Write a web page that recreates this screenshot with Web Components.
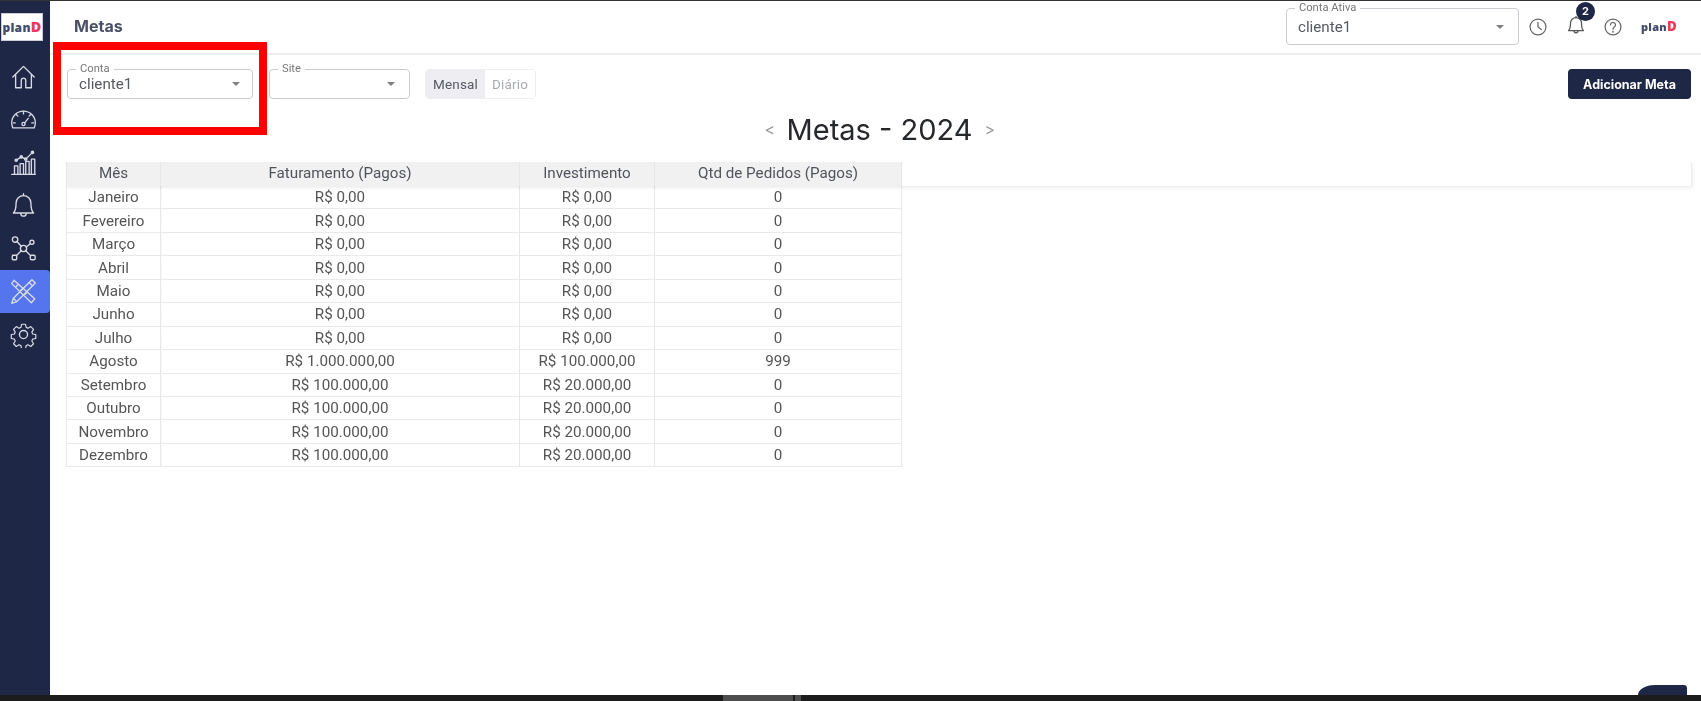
<!DOCTYPE html>
<html lang="pt-BR">
<head>
<meta charset="utf-8">
<title>Metas</title>
<style>
  html, body { margin: 0; height: 100%; background: #fff; overflow: hidden; }
  body { font-family: Roboto, "Liberation Sans", sans-serif; }
</style>
</head>
<body>
<app-shell>
  <side-nav slot="nav"></side-nav>
  <top-header slot="header" title="Metas"></top-header>
  <filter-bar slot="filters"></filter-bar>
  <year-heading slot="heading" label="Metas - 2024"></year-heading>
  <goals-table slot="table"></goals-table>
</app-shell>

<script>
// brand mark, used in the sidebar and in the header
class BrandLogo extends HTMLElement {
    connectedCallback() {
        this.attachShadow({ mode: 'open' }).innerHTML = `
      <style>
        :host {
          display: inline-block;
          font: 800 var(--logo-size, 12px)/1 "Open Sans", Inter, sans-serif;
          color: #454b6b;
          letter-spacing: .3px;
        }
        b { color: #ee3a5a; font-weight: 800; font-size: 1.2em; }
      </style>
      plan<b>D</b>`;
    }
}
customElements.define('brand-logo', BrandLogo);

// stroke icons of the sidebar and header
const ICONS = {
    home: '<path d="M2.5 12.5 12 3l9.5 9.5"/><path d="M5 10.5V22h5v-6.5a2 2 0 0 1 4 0V22h5V10.5"/>',
    gauge: '<path d="M2.5 19.5h19a10.6 10.6 0 0 0 1-4.5 10.5 10.5 0 0 0-21 0c0 1.6.4 3.1 1 4.5Z"/><path d="M12 7V4.8M7 9 5.6 7.6M17 9l1.4-1.4M4.6 15H3M21 15h-1.6"/><circle cx="12" cy="16" r="1.4"/><path d="m13 15 3.2-4"/>',
    chart: '<path d="M1.5 22.5h21"/><path d="M4 22v-7h3v7M9 22v-9h3v9M14 22v-11h3v11M19 22V9h3v13"/><path d="M5.5 10 10 7l4 2 6-6"/><circle cx="5.5" cy="10" r="1"/><circle cx="10" cy="7" r="1"/><circle cx="14" cy="9" r="1"/><circle cx="20" cy="3" r="1"/>',
    bell: '<path d="M12 3.2a6.6 6.6 0 0 0-6.6 6.6c0 5.6-.8 7.4-2.4 8.9h18c-1.6-1.5-2.4-3.3-2.4-8.9A6.6 6.6 0 0 0 12 3.2Z"/><path d="M12 1.5v1.7M9.6 19a2.4 2.4 0 0 0 4.8 0"/>',
    network: '<circle cx="12" cy="12" r="2.8"/><circle cx="4.5" cy="4" r="2.4"/><circle cx="19.5" cy="6.5" r="1.8"/><rect x="2" y="18" width="4" height="4" rx=".8"/><rect x="18" y="18" width="4.4" height="4" rx="1.4"/><path d="m6.2 5.8 3.8 4.2M14.5 10.7l3.5-3M10 14l-4.4 4.4M14 14l4.4 4.4"/>',
    tools: '<path d="M3.5 2 22 18.5 19 22 1.5 5Z"/><path d="m7 6-1.5 1.5M11 9.5l-1.5 1.5M15 13l-1.5 1.5"/><path d="M19.5 1.5 22.5 4.5 6 21l-4.5 1.5L3 18Z"/><path d="m17 4 3 3M3 18l3 3"/>',
    gear: '<circle cx="12" cy="12" r="3.6"/><path d="M10 1.5h4l.7 3.2 1.9.9 2.8-1.7 2.8 2.8-1.7 2.8.8 1.9 3.2.6v4l-3.2.7-.8 1.9 1.7 2.8-2.8 2.8-2.8-1.7-1.9.8-.7 3.2h-4l-.7-3.2-1.9-.8-2.8 1.7-2.8-2.8 1.7-2.8-.8-1.9-3.2-.7v-4l3.2-.6.8-1.9-1.7-2.8 2.8-2.8 2.8 1.7 1.9-.9Z" transform="translate(1.6 1.6) scale(.87)"/>',
    clock: '<circle cx="12" cy="12" r="9.5"/><path d="M12 6.5V12l4 3"/>',
    help: '<circle cx="12" cy="12" r="9.5"/><path d="M9 9.5a3 3 0 1 1 4.6 2.5c-1 .7-1.6 1.3-1.6 2.6"/><circle cx="12" cy="17.6" r=".4"/>'
};

class LineIcon extends HTMLElement {
    connectedCallback() {
        const name = this.getAttribute('name');
        this.attachShadow({ mode: 'open' }).innerHTML = `
      <style>
        :host { display: inline-flex; width: var(--icon-size, 24px); height: var(--icon-size, 24px); }
        svg { width: 100%; height: 100%; fill: none; stroke: currentColor; stroke-width: var(--icon-stroke, 1.2); stroke-linecap: round; stroke-linejoin: round; }
      </style>
      <svg viewBox="0 0 24 24">${ICONS[name]}</svg>`;
    }
}
customElements.define('line-icon', LineIcon);

// Page frame: sidebar, content column, dark bottom strip
class AppShell extends HTMLElement {
    connectedCallback() {
        this.attachShadow({ mode: 'open' }).innerHTML = `
      <style>
        :host { display: flex; flex-direction: column; height: 100vh; position: relative; filter: blur(.35px); }
        .top { height: 1px; background: #333; flex: none; }
        .body { flex: 1; display: flex; min-height: 0; }
        main { flex: 1; min-width: 0; display: flex; flex-direction: column; }
        .bottom { height: 6px; flex: none; background: #1c1c1c; display: flex; padding-left: 723px; }
        .thumb { width: 70px; background: #4d4d4d; border-right: 2px solid #1c1c1c; }
        .thumb + i { width: 6px; background: #4d4d4d; }
        .mark {
          position: absolute; left: 53px; top: 42px; width: 214px; height: 93px;
          box-sizing: border-box; border: 8px solid #fe0000; pointer-events: none;
        }
        .chat {
          position: absolute; right: 14px; bottom: 6px; width: 49px; height: 10px;
          background: #1f2747; border-radius: 20px 4px 0 0 / 12px 4px 0 0;
        }
      </style>
      <div class="top"></div>
      <div class="body">
        <slot name="nav"></slot>
        <main>
          <slot name="header"></slot>
          <slot name="filters"></slot>
          <slot name="heading"></slot>
          <slot name="table"></slot>
        </main>
      </div>
      <div class="bottom"><div class="thumb"></div><i></i></div>
      <div class="mark"></div>
      <div class="chat"></div>`;
    }
}
customElements.define('app-shell', AppShell);

class SideNav extends HTMLElement {
    connectedCallback() {
        const items = ['home', 'gauge', 'chart', 'bell', 'network', 'tools', 'gear'];
        const links = items.map(name =>
            `<a class="${name === 'tools' ? 'active' : ''}"><line-icon name="${name}"></line-icon></a>`).join('');
        this.attachShadow({ mode: 'open' }).innerHTML = `
      <style>
        :host {
          display: flex; flex-direction: column; width: 50px; flex: none;
          background: #1f2747; color: #d9dbe4; --icon-size: 27px; --logo-size: 12px;
        }
        .logo { height: 54px; display: flex; align-items: flex-start; padding: 12px 0 0 1px; box-sizing: border-box; }
        .logo span {
          width: 42px; height: 28px; background: #fff; border: 1px solid #ccd;
          box-sizing: border-box; display: flex; align-items: center; justify-content: center;
        }
        a { height: 43px; display: flex; align-items: center; justify-content: center; padding-right: 3px; box-sizing: border-box; }
        a.active { background: #5575ee; border-radius: 0 4px 4px 0; }
      </style>
      <div class="logo"><span><brand-logo></brand-logo></span></div>
      ${links}`;
    }
}
customElements.define('side-nav', SideNav);

// Outlined select with the label cut into its border
class OutlinedSelect extends HTMLElement {
    connectedCallback() {
        const label = this.getAttribute('label') || '';
        const value = this.getAttribute('value') || '';
        this.attachShadow({ mode: 'open' }).innerHTML = `
      <style>
        :host {
          display: block; position: relative; box-sizing: border-box;
          border: 1px solid #c9cbd0; border-radius: 4px; height: 30px;
          color: #555a60; background: #fff;
        }
        label {
          position: absolute; left: 8px; top: -7px; padding: 0 4px; background: #fff;
          font-size: 11.2px; line-height: 12px; color: #777;
        }
        .value { position: absolute; left: 11px; top: 0; bottom: 0; display: flex; align-items: center; font-size: 15.2px; }
        .caret {
          position: absolute; right: var(--caret-right, 14px); top: 50%; margin-top: -2px;
          border: 4.5px solid transparent; border-top-color: #808080; border-bottom: 0;
        }
      </style>
      <label>${label}</label>
      <span class="value">${value}</span>
      <span class="caret"></span>`;
    }
}
customElements.define('outlined-select', OutlinedSelect);

class TopHeader extends HTMLElement {
    connectedCallback() {
        this.attachShadow({ mode: 'open' }).innerHTML = `
      <style>
        :host {
          display: flex; align-items: center; height: 54px; flex: none; box-sizing: border-box;
          border-bottom: 2px solid #eeeeef; padding: 0 10px 2px 24px;
        }
        h1 { margin: 0; font: 700 16px Inter, "Liberation Sans", sans-serif; color: #4a4f68; flex: 1; }
        outlined-select { width: 233px; height: 37px; margin: 1px 9px 0 0; }
        .icons { display: flex; align-items: center; color: #666; --icon-size: 20px; --icon-stroke: 1.5; padding-top: 2px; }
        .bell { position: relative; margin: 0 17px 0 18px; color: #555; }
        .bell em {
          position: absolute; left: 10px; top: -13px; width: 19px; height: 19px; border-radius: 50%;
          background: #1f2747; color: #fff; font: 700 11px/19px Inter, sans-serif; text-align: center;
        }
        brand-logo { margin: 0 14px 0 18px; --logo-size: 11px; }
      </style>
      <h1>${this.getAttribute('title')}</h1>
      <outlined-select label="Conta Ativa" value="cliente1"></outlined-select>
      <div class="icons">
        <line-icon name="clock"></line-icon>
        <span class="bell"><line-icon name="bell"></line-icon><em>2</em></span>
        <line-icon name="help"></line-icon>
        <brand-logo></brand-logo>
      </div>`;
    }
}
customElements.define('top-header', TopHeader);

class ViewToggle extends HTMLElement {
    connectedCallback() {
        this.attachShadow({ mode: 'open' }).innerHTML = `
      <style>
        :host {
          display: flex; height: 30px; box-sizing: border-box; border: 1px solid #eeeef1;
          border-radius: 4px; overflow: hidden; font-size: 13.5px; letter-spacing: .2px;
        }
        span { display: flex; align-items: center; justify-content: center; }
        .on { width: 59px; background: #eeeef2; color: #555a66; }
        .off { width: 50px; color: #a9abb0; }
      </style>
      <span class="on">Mensal</span><span class="off">Diário</span>`;
    }
}
customElements.define('view-toggle', ViewToggle);

class FilterBar extends HTMLElement {
    connectedCallback() {
        this.attachShadow({ mode: 'open' }).innerHTML = `
      <style>
        :host { display: flex; align-items: flex-start; flex: none; padding: 14px 10px 0 17px; height: 52px; box-sizing: border-box; }
        .account { width: 186px; margin-right: 16px; --caret-right: 12px; }
        .site { width: 141px; margin-right: 15px; }
        view-toggle { width: 111px; }
        button {
          margin-left: auto; width: 123px; height: 30px; border: 0; border-radius: 4px; padding: 0;
          background: #1f2747; color: #fff; font: 700 12.5px Inter, "Liberation Sans", sans-serif;
        }
      </style>
      <outlined-select class="account" label="Conta" value="cliente1"></outlined-select>
      <outlined-select class="site" label="Site"></outlined-select>
      <view-toggle></view-toggle>
      <button>Adicionar Meta</button>`;
    }
}
customElements.define('filter-bar', FilterBar);

class YearHeading extends HTMLElement {
    connectedCallback() {
        this.attachShadow({ mode: 'open' }).innerHTML = `
      <style>
        :host {
          display: flex; align-items: center; justify-content: center; flex: none;
          height: 55px; gap: 12px; box-sizing: border-box; padding: 0 0 11px 8px;
        }
        h2 { margin: 0; font: 400 29px Inter, "Liberation Sans", sans-serif; color: #26282c; }
        span { font: 400 16px Inter, "Liberation Sans", sans-serif; color: #999; width: 10px; text-align: center; }
      </style>
      <span>&lt;</span><h2>${this.getAttribute('label')}</h2><span>&gt;</span>`;
    }
}
customElements.define('year-heading', YearHeading);

const MONTHS = [
    ['Janeiro', 'R$ 0,00', 'R$ 0,00', '0'],
    ['Fevereiro', 'R$ 0,00', 'R$ 0,00', '0'],
    ['Março', 'R$ 0,00', 'R$ 0,00', '0'],
    ['Abril', 'R$ 0,00', 'R$ 0,00', '0'],
    ['Maio', 'R$ 0,00', 'R$ 0,00', '0'],
    ['Junho', 'R$ 0,00', 'R$ 0,00', '0'],
    ['Julho', 'R$ 0,00', 'R$ 0,00', '0'],
    ['Agosto', 'R$ 1.000.000,00', 'R$ 100.000,00', '999'],
    ['Setembro', 'R$ 100.000,00', 'R$ 20.000,00', '0'],
    ['Outubro', 'R$ 100.000,00', 'R$ 20.000,00', '0'],
    ['Novembro', 'R$ 100.000,00', 'R$ 20.000,00', '0'],
    ['Dezembro', 'R$ 100.000,00', 'R$ 20.000,00', '0']
];

class GoalsTable extends HTMLElement {
    connectedCallback() {
        const head = ['Mês', 'Faturamento (Pagos)', 'Investimento', 'Qtd de Pedidos (Pagos)'];
        const cells = row => row.map(text => `<div class="cell">${text}</div>`).join('');
        this.attachShadow({ mode: 'open' }).innerHTML = `
      <style>
        :host { display: block; margin: 0 9px 0 16px; font-size: 15.2px; color: #555; }
        .row { display: grid; grid-template-columns: 94px 359px 135px 248px 1fr; height: 23.45px; }
        .head { height: 24px; position: relative; box-shadow: 1px 2px 3px rgba(0,0,0,.07); border-right: 1px solid #eee; }
        .cell {
          display: flex; align-items: center; justify-content: center; box-sizing: border-box;
          border-left: 1px solid #e8e8e8; border-bottom: 1px solid #eaeaea;
        }
        .cell:nth-child(4) { border-right: 1px solid #e8e8e8; }
        .cell:first-child { box-shadow: 2px 0 2px -1px rgba(0,0,0,.09); }
        .head .cell { background: #f1f1f2; border-bottom: 0; color: #50545a; padding-bottom: 2px; }
      </style>
      <div class="row head">${cells(head)}</div>
      ${MONTHS.map(row => `<div class="row">${cells(row)}</div>`).join('')}`;
    }
}
customElements.define('goals-table', GoalsTable);
</script>
</body>
</html>
